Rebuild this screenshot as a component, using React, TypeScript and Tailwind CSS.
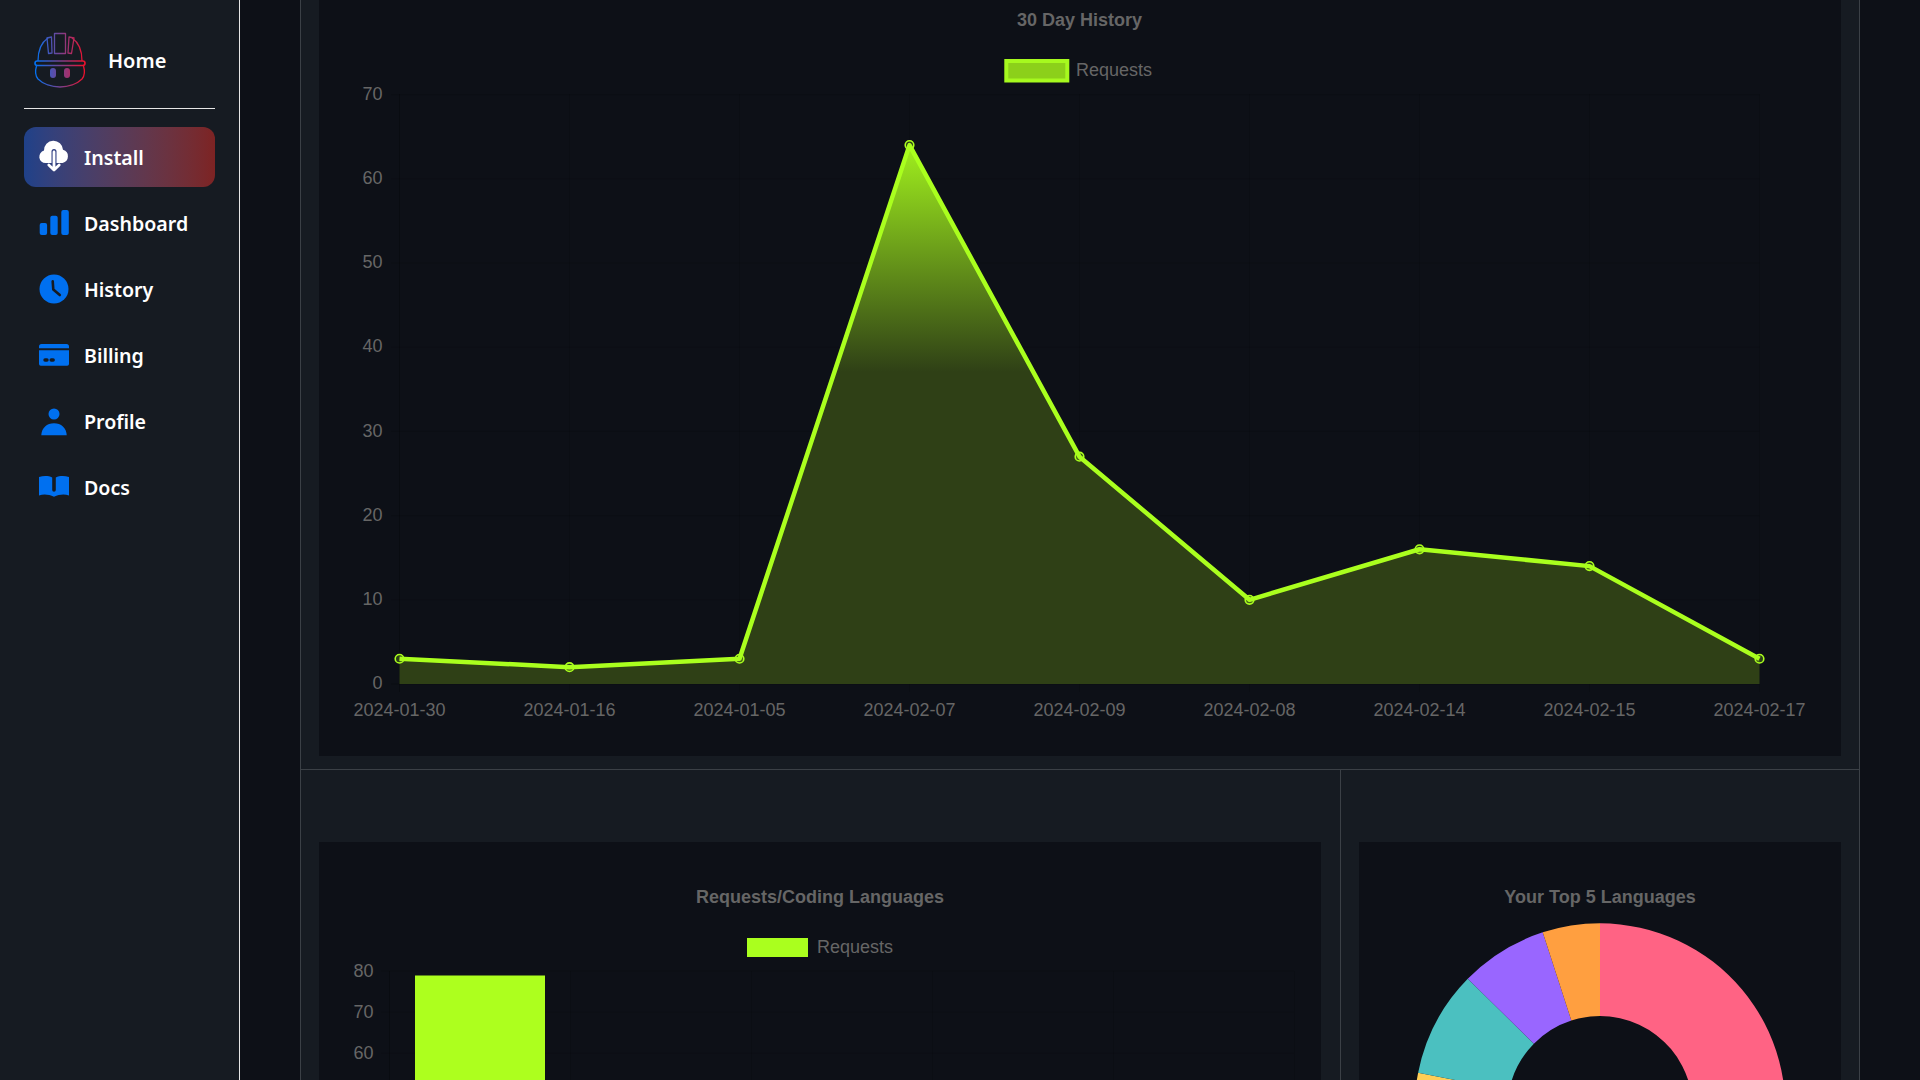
import React from "react";

// --- Chart data (x/y helpers work in page pixels, the svgs use matching viewBoxes) ---
const requests = [3, 2, 3, 64, 27, 10, 16, 14, 3];
const dates = [
  "2024-01-30",
  "2024-01-16",
  "2024-01-05",
  "2024-02-07",
  "2024-02-09",
  "2024-02-08",
  "2024-02-14",
  "2024-02-15",
  "2024-02-17",
];
const lineX = (i: number) => 399.5 + i * 170;
const lineY = (v: number) => 684 - v * 8.42;
const barY = (v: number) => 971 + (80 - v) * 4.11;

// --- Sidebar icons, all on a 30x30 box ---
type IconProps = { className?: string };

const InstallIcon = ({ className }: IconProps) => (
  <svg viewBox="0 0 30 30" fill="none" className={className} overflow="visible">
    <path
      d="M6.5 21A6.300 6.300 0 0 1 5 8.600A9 9 0 0 1 24 7.800A6.800 6.800 0 0 1 23.500 21Z"
      fill="#fff"
    />
    <path d="M15 9.500V21" stroke="#2f3f82" strokeWidth="5" strokeLinecap="round" />
    <path d="M15 10V27M9.800 23L15 28L20.200 23" stroke="#fff" strokeWidth="2.800" strokeLinecap="round" strokeLinejoin="round" />
  </svg>
);

const DashboardIcon = ({ className }: IconProps) => (
  <svg viewBox="0 0 30 30" className={className} fill="currentColor">
    <rect x="0.700" y="15" width="7.400" height="12" rx="2" />
    <rect x="11.300" y="7.700" width="7.400" height="19.300" rx="2" />
    <rect x="22.300" y="2" width="7.500" height="25" rx="2" />
  </svg>
);

const HistoryIcon = ({ className }: IconProps) => (
  <svg viewBox="0 0 30 30" fill="none" className={className}>
    <circle cx="15" cy="15" r="14.500" fill="currentColor" />
    <path d="M13.700 7.300L14.300 15.500L20.800 21" stroke="#161b22" strokeWidth="2.600" strokeLinecap="round" strokeLinejoin="round" />
  </svg>
);

const BillingIcon = ({ className }: IconProps) => (
  <svg viewBox="0 0 30 30" className={className} fill="currentColor">
    <path d="M0 8.300V6.500A2.500 2.500 0 0 1 2.500 4H27.500A2.500 2.500 0 0 1 30 6.500V8.300Z" />
    <path
      fillRule="evenodd"
      d="M0 10.300H30V24A1.800 1.800 0 0 1 28.200 25.800H1.800A1.800 1.800 0 0 1 0 24ZM6 18.300A1.700 1.700 0 0 0 6 21.700H8A1.700 1.700 0 0 0 8 18.300ZM12.200 18.300A1.700 1.700 0 0 0 12.200 21.700H14.200A1.700 1.700 0 0 0 14.200 18.300Z"
    />
  </svg>
);

const ProfileIcon = ({ className }: IconProps) => (
  <svg viewBox="0 0 30 30" className={className} fill="currentColor">
    <circle cx="15" cy="8" r="5.500" />
    <path d="M2.300 29.300C2.500 22 8 17.300 15 17.300C22 17.300 27.500 22 27.700 29.300Z" />
  </svg>
);

const DocsIcon = ({ className }: IconProps) => (
  <svg viewBox="0 0 30 30" className={className} fill="currentColor">
    <path d="M0 5C4.500 3.600 9.500 3.600 13.200 5.500V18A1.800 1.800 0 0 0 16.800 18V5.500C20.500 3.600 25.500 3.600 30 5V23.500C25 21.700 20 22.500 15 24.800C10 22.500 5 21.700 0 23.500Z" />
  </svg>
);

const navItems = [
  { label: "Dashboard", Icon: DashboardIcon },
  { label: "History", Icon: HistoryIcon },
  { label: "Billing", Icon: BillingIcon },
  { label: "Profile", Icon: ProfileIcon },
  { label: "Docs", Icon: DocsIcon },
];

const polar = (r: number, deg: number) => {
  const a = ((deg - 90) * Math.PI) / 180;
  return [1600 + r * Math.cos(a), 1108.7 + r * Math.sin(a)];
};

// ring slice between two clockwise angles measured from 12 o'clock
const slice = (from: number, to: number) => {
  const R = 185.4;
  const r = 92.7;
  const [x1, y1] = polar(R, from);
  const [x2, y2] = polar(R, to);
  const [x3, y3] = polar(r, to);
  const [x4, y4] = polar(r, from);
  const large = to - from > 180 ? 1 : 0;
  return `M${x1} ${y1}A${R} ${R} 0 ${large} 1 ${x2} ${y2}L${x3} ${y3}A${r} ${r} 0 ${large} 0 ${x4} ${y4}Z`;
};

const slices = [
  { from: 0, to: 200, color: "#ff6384" },
  { from: 200, to: 281.2, color: "#ffce56" },
  { from: 281.2, to: 314.5, color: "#4bc0c0" },
  { from: 314.5, to: 342, color: "#9966ff" },
  { from: 342, to: 360, color: "#ff9f40" },
];

const Logo = () => (
  <svg width="60" height="64" viewBox="30 28 60 64" fill="none" className="shrink-0">
    <defs>
      <linearGradient id="helmet" gradientUnits="userSpaceOnUse" x1="35" y1="60" x2="85" y2="60">
        <stop offset="0" stopColor="#0073f5" />
        <stop offset="1" stopColor="#f0102a" />
      </linearGradient>
    </defs>
    <g stroke="url(#helmet)" strokeWidth="1.3" strokeLinejoin="round">
      <path d="M38 61C38 50 42 42 48 38M72 38C78 42 82 50 82 61" />
      <path d="M54.500 33.500H65.500V53.500H54.500Z" />
      <path d="M47 38L51.500 37L52 53L48.500 53.500Z" />
      <path d="M69 37L74 38L71.500 53.500L68 53Z" />
      <rect x="35" y="61" width="50" height="4.500" rx="2.200" strokeWidth="1.600" />
      <path d="M36.500 66C35 71 35.500 76 38 79C43 84 52 87 60 87C68 87 77 84 82 79C84.500 76 85 71 83.500 66" />
    </g>
    <rect x="50" y="68" width="6" height="10" rx="3" fill="url(#helmet)" />
    <rect x="64" y="68" width="6" height="10" rx="3" fill="url(#helmet)" />
  </svg>
);

const Sidebar = () => (
  <aside className="w-[240px] shrink-0 border-r border-[#e6e6e6] bg-[#161b22] px-6 font-['Noto_Sans',sans-serif] text-[19.6px] font-semibold text-white">
    <div className="flex h-[109px] items-center gap-[18px] border-b border-[#e6e6e6] pl-[6px] pt-[12px]">
      <Logo />
      <span className="pt-[2px] text-[20px]">Home</span>
    </div>
    <nav className="mt-[18px] flex flex-col gap-[6px]">
      <a className="flex h-[60px] items-center gap-[15px] rounded-xl bg-gradient-to-r from-[#1f4189] to-[#7d2323] px-[15px]">
        <InstallIcon className="h-[30px] w-[30px] shrink-0" />
        <span className="pt-[2px]">Install</span>
      </a>
      {navItems.map(({ label, Icon }) => (
        <a key={label} className="flex h-[60px] items-center gap-[15px] px-[15px]">
          <Icon className="h-[30px] w-[30px] shrink-0 text-[#0070f0]" />
          <span className="pt-[2px]">{label}</span>
        </a>
      ))}
    </nav>
  </aside>
);

const HistoryChart = () => {
  const points = requests.map((v, i) => `${lineX(i)},${lineY(v)}`).join(" ");
  return (
    <svg viewBox="319 0 1522 756" className="block h-[756px] w-[1522px] bg-[#0d1017] font-['Liberation_Sans',sans-serif] text-[18px]">
      <defs>
        <linearGradient id="area" gradientUnits="userSpaceOnUse" x1="0" y1="125" x2="0" y2="372">
          <stop offset="0" stopColor="#aaff1e" />
          <stop offset="1" stopColor="#2f4016" />
        </linearGradient>
      </defs>
      <text x="1079.5" y="26" textAnchor="middle" className="fill-[#666] font-bold">30 Day History</text>
      <rect x="1006.300" y="61" width="61" height="19.500" fill="#8cd01a" stroke="#a6f91e" strokeWidth="4" />
      <text x="1076" y="76" className="fill-[#666]">Requests</text>

      {[0, 10, 20, 30, 40, 50, 60, 70].map((v) => (
        <g key={v}>
          <line x1="391" x2="1759.5" y1={lineY(v)} y2={lineY(v)} stroke="#000" strokeOpacity={v === 0 ? 0.25 : 0.1} />
          <text x="382.5" y={lineY(v) + 5.2} textAnchor="end" className="fill-[#666]">{v}</text>
        </g>
      ))}
      {dates.map((d, i) => (
        <g key={d}>
          <line x1={lineX(i)} x2={lineX(i)} y1="94" y2="692" stroke="#000" strokeOpacity={i === 0 ? 0.25 : 0.1} />
          <text x={lineX(i)} y="715.500" textAnchor="middle" className="fill-[#666]">{d}</text>
        </g>
      ))}

      <polygon points={`${lineX(0)},684 ${points} ${lineX(8)},684`} fill="url(#area)" />
      <polyline points={points} fill="none" stroke="#aaff1e" strokeWidth="4.500" strokeLinejoin="round" />
      {requests.map((v, i) => (
        <circle key={i} cx={lineX(i)} cy={lineY(v)} r="4.300" fill="#aaff1e" fillOpacity="0.2" stroke="#aaff1e" strokeWidth="1.600" />
      ))}
    </svg>
  );
};

const LanguagesChart = () => (
  <svg viewBox="319 842 1002 238" className="block h-[238px] w-[1002px] bg-[#0d1017] font-['Liberation_Sans',sans-serif] text-[18px]">
    <text x="820" y="903" textAnchor="middle" className="fill-[#666] font-bold">Requests/Coding Languages</text>
    <rect x="747" y="938" width="61" height="19" fill="#aaff1e" />
    <text x="817" y="953" className="fill-[#666]">Requests</text>

    {[80, 70, 60].map((v) => (
      <g key={v}>
        <line x1="381" x2="1294" y1={barY(v)} y2={barY(v)} stroke="#000" strokeOpacity="0.1" />
        <text x="373.500" y={barY(v) + 5.5} textAnchor="end" className="fill-[#666]">{v}</text>
      </g>
    ))}
    {[389.5, 570.5, 751.5, 932.5, 1113.5, 1294.5].map((x, i) => (
      <line key={x} x1={x} x2={x} y1="971" y2="1080" stroke="#000" strokeOpacity={i === 0 ? 0.25 : 0.1} />
    ))}
    <rect x="415" y="975.500" width="130" height="105" fill="#adff1e" />
  </svg>
);

const TopLanguagesChart = () => (
  <svg viewBox="1359 842 482 238" className="block h-[238px] w-[482px] bg-[#0d1017] font-['Liberation_Sans',sans-serif] text-[18px]">
    <text x="1600" y="903" textAnchor="middle" className="fill-[#666] font-bold">Your Top 5 Languages</text>
    {slices.map((s) => (
      <path key={s.color} d={slice(s.from, s.to)} fill={s.color} />
    ))}
  </svg>
);

export default function App() {
  return (
    <div className="flex h-screen overflow-hidden bg-[#0d1017]">
      <Sidebar />
      <main className="flex-1 px-[60px]">
        <div className="border-x border-[#3b4046] bg-[#161b22]">
          <section className="border-b border-[#3b4046] px-[18px] pb-[13px]">
            <HistoryChart />
          </section>
          <section className="flex">
            <div className="w-[1040px] border-r border-[#3b4046] pl-[18px] pr-[19px] pt-[72px]">
              <LanguagesChart />
            </div>
            <div className="flex-1 px-[18px] pt-[72px]">
              <TopLanguagesChart />
            </div>
          </section>
        </div>
      </main>
    </div>
  );
}
